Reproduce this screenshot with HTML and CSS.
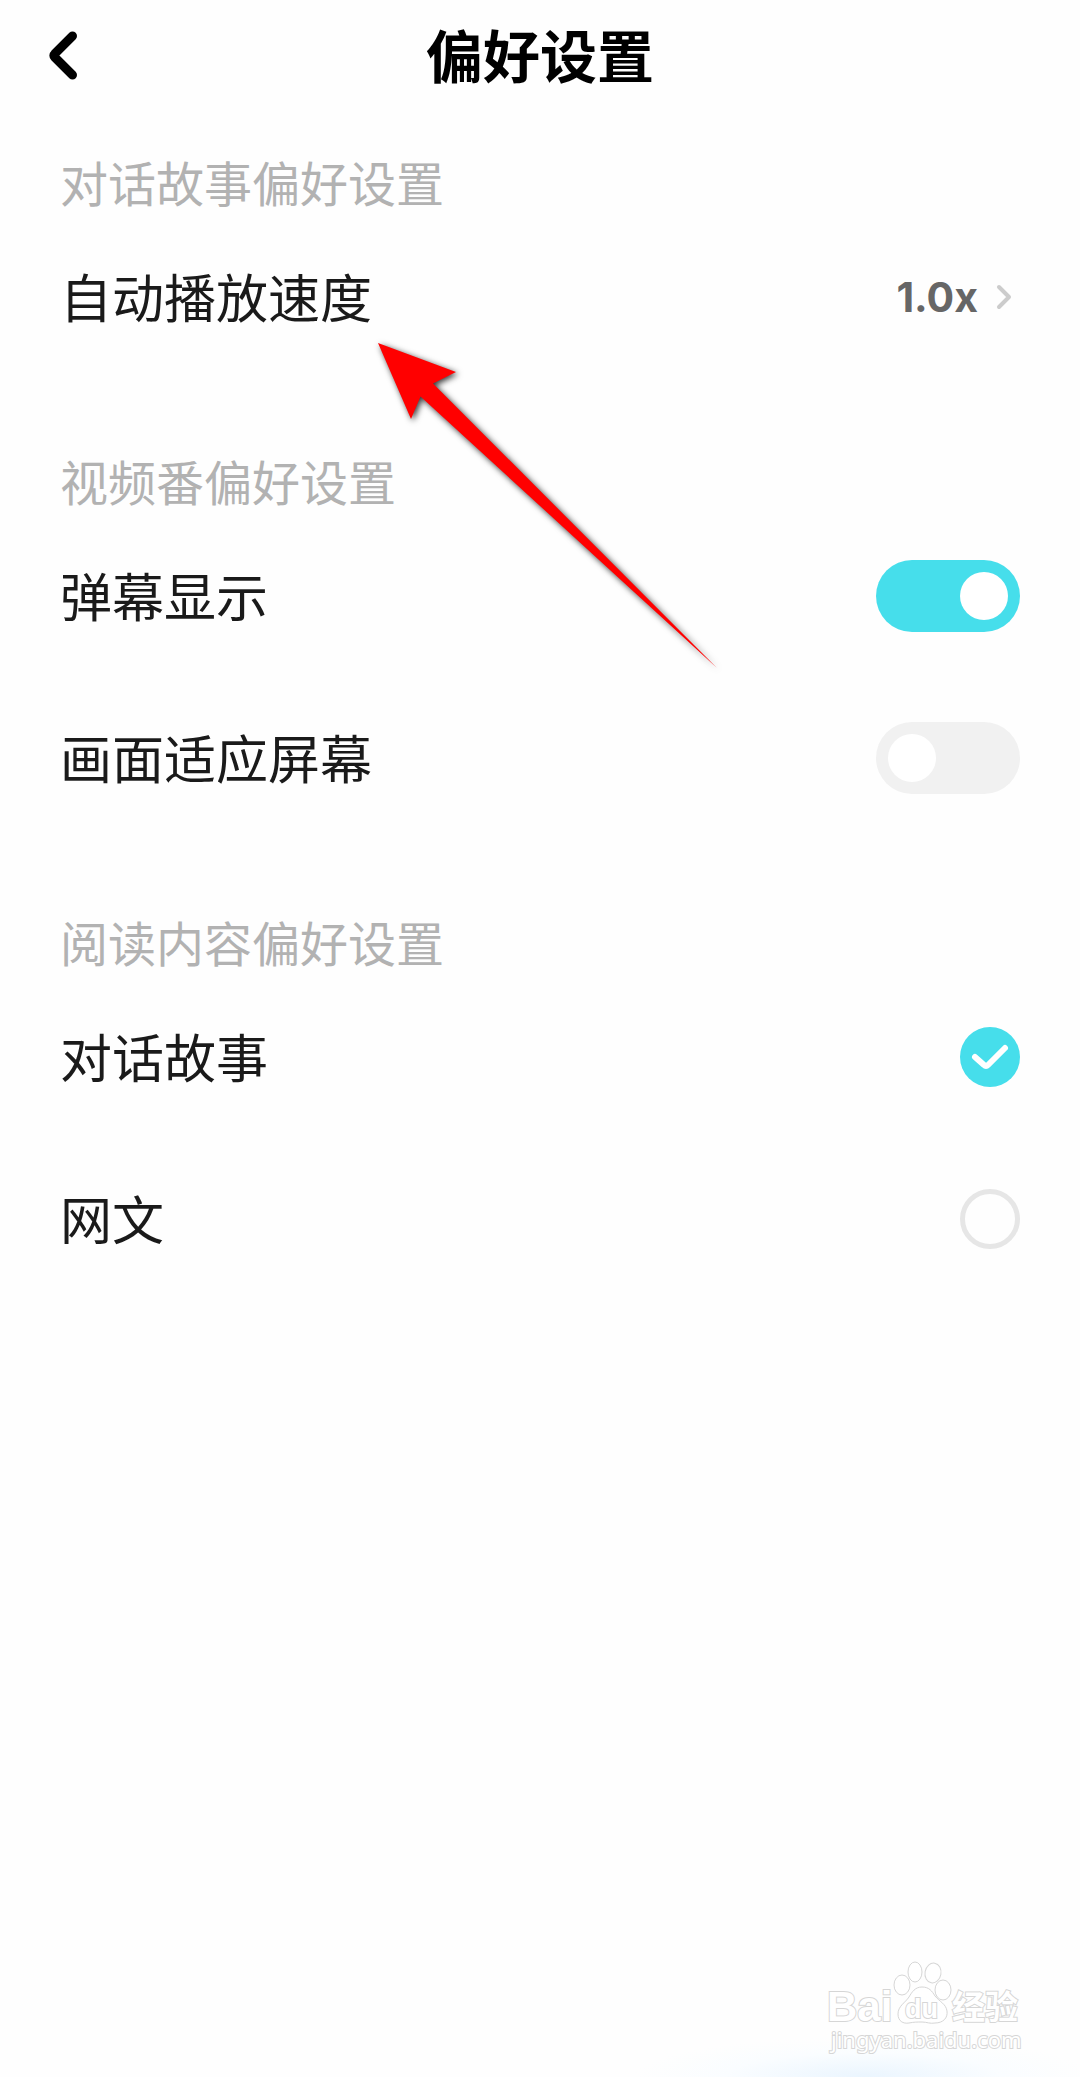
FILE: index.html
```html
<!DOCTYPE html>
<html lang="zh-CN">
<head>
    <meta charset="UTF-8">
    <meta name="viewport" content="width=device-width, initial-scale=1.0">
    <title>偏好设置</title>
    <link rel="stylesheet" href="styles.css">
</head>
<body>

    <header class="topbar">
        <button class="back" type="button" aria-label="返回">
            <svg width="34" height="68" viewBox="0 0 34 68" fill="none" stroke="#000" stroke-width="9" stroke-linecap="round" stroke-linejoin="round">
                <path d="M27.500 17L9.500 35a2 2 0 0 0 0 3L27.500 56"/>
            </svg>
        </button>
        <h1>偏好设置</h1>
    </header>

    <main>
        <section>
            <h2>对话故事偏好设置</h2>
            <button class="row" type="button">
                <span class="name">自动播放速度</span>
                <span class="value">1.0x
                    <svg width="24" height="32" viewBox="0 0 24 32" fill="none" stroke="#ccc" stroke-width="4" stroke-linecap="round" stroke-linejoin="round">
                        <path d="M3 6l10 10L3 26"/>
                    </svg>
                </span>
            </button>
        </section>

        <section>
            <h2>视频番偏好设置</h2>
            <label class="row">
                <span class="name">弹幕显示</span>
                <input class="switch" type="checkbox" checked>
            </label>
            <label class="row">
                <span class="name">画面适应屏幕</span>
                <input class="switch" type="checkbox">
            </label>
        </section>

        <section>
            <h2>阅读内容偏好设置</h2>
            <label class="row">
                <span class="name">对话故事</span>
                <span class="tick">
                    <input type="checkbox" checked>
                    <svg viewBox="0 0 60 60" fill="none" stroke="#fff" stroke-width="6" stroke-linecap="round" stroke-linejoin="round">
                        <path d="M15 30l9 8q2 2 4 0L45 21"/>
                    </svg>
                </span>
            </label>
            <label class="row">
                <span class="name">网文</span>
                <span class="tick">
                    <input type="checkbox">
                    <svg viewBox="0 0 60 60" fill="none" stroke="#fff" stroke-width="6" stroke-linecap="round" stroke-linejoin="round">
                        <path d="M15 30l9 8q2 2 4 0L45 21"/>
                    </svg>
                </span>
            </label>
        </section>

        <!-- pointer over the speed row -->
        <svg class="arrow" width="350" height="335" viewBox="0 0 350 335" aria-hidden="true">
            <path fill="#f00" d="M3 3L81 32 58 43.500 342 328 45.500 56.500 36 79z"/>
        </svg>
    </main>

    <footer>
        <svg class="watermark" width="200" height="100" viewBox="0 0 200 100">
            <text class="brand" x="3" y="63">Bai</text>
            <ellipse cx="78" cy="27" rx="8" ry="10"/>
            <ellipse cx="91" cy="14" rx="7" ry="10"/>
            <ellipse cx="109" cy="15" rx="8" ry="10" transform="rotate(10 109 15)"/>
            <ellipse cx="119" cy="32" rx="8" ry="10"/>
            <path d="M98 29c-7 0-10 5-13 10-4 6-11 9-11 17 0 7 5 10 11 9 5-1 8-1 13-1s8 2 13 1c8 0 13-5 12-12-1-7-7-9-12-15-3-5-6-9-13-9z"/>
            <text class="du" x="81" y="60">du</text>
            <text class="cn" x="128" y="61">经验</text>
            <text class="url" x="7" y="90">jingyan.baidu.com</text>
        </svg>
    </footer>

</body>
</html>
```

FILE: styles.css
```css
* {
    box-sizing: border-box;
}
body {
    display: flex;
    flex-direction: column;
    min-height: 100vh;
    margin: 0;
    font-family: "Noto Sans CJK SC", sans-serif;
    color: #1a1a1a;
    background-color: #fefefe;
}
button {
    padding: 0;
    border: none;
    background: none;
    font: inherit;
    color: inherit;
    cursor: pointer;
}
svg {
    display: block;
}
.topbar {
    display: grid;
    grid-template-columns: 1fr auto 1fr;
    align-items: center;
    height: 105px;
    padding: 0 45px;
}
.back {
    width: 60px;
}
h1 {
    margin: 0;
    font-size: 57px;
    line-height: 80px;
    font-weight: bold;
    color: #000;
}
main {
    position: relative;
    padding: 45px 60px 0;
}
section {
    margin-bottom: 71px;
}
h2 {
    margin: 0;
    padding-bottom: 4px;
    font-size: 48px;
    line-height: 62px;
    font-weight: normal;
    color: #b2b2b2;
}
.row {
    display: flex;
    align-items: center;
    justify-content: space-between;
    width: 100%;
    height: 162px;
    font-size: 52px;
    text-align: left;
    cursor: pointer;
}
.name {
    padding-bottom: 4px;
}
.value {
    display: flex;
    align-items: center;
    gap: 18px;
    font-family: Inter, sans-serif;
    font-size: 41px;
    font-weight: bold;
    color: #666;
}
input {
    appearance: none;
    margin: 0;
    cursor: pointer;
}
.switch {
    display: flex;
    width: 144px;
    height: 72px;
    padding: 12px;
    border-radius: 36px;
    background-color: #f1f1f1;
}
.switch::before {
    content: "";
    width: 48px;
    height: 48px;
    border-radius: 50%;
    background-color: #fff;
}
.switch:checked {
    justify-content: flex-end;
    background-color: #46deeb;
}
.tick {
    display: grid;
    width: 60px;
    height: 60px;
}
.tick input,
.tick svg {
    grid-area: 1 / 1;
    width: 60px;
    height: 60px;
}
.tick input {
    border: 5px solid #e6e6e6;
    border-radius: 50%;
}
.tick input:checked {
    border: none;
    background-color: #46deeb;
}
.tick svg {
    pointer-events: none;
}
.tick input:not(:checked) + svg {
    visibility: hidden;
}
.arrow {
    position: absolute;
    top: 235px;
    left: 375px;
    overflow: visible;
    pointer-events: none;
    filter: drop-shadow(2px 2px 3px rgba(0, 0, 0, 0.8));
}
footer {
    display: flex;
    justify-content: flex-end;
    margin-top: auto;
    padding: 0 56px 19px;
    background: radial-gradient(230px 40px at 80% 100%, #eaf5fe, #fafdff 60%, transparent);
}
.watermark {
    fill: #fff;
    stroke: #d6d6d6;
    stroke-width: 1;
}
.watermark text {
    stroke-width: 2;
    paint-order: stroke;
}
.brand {
    font: bold 42px "Liberation Sans", sans-serif;
}
.du {
    font: bold 27px "Liberation Sans", sans-serif;
}
.cn {
    font: bold 33px "Noto Sans CJK SC", sans-serif;
}
.url {
    font: 22px "Noto Sans", sans-serif;
}
```
